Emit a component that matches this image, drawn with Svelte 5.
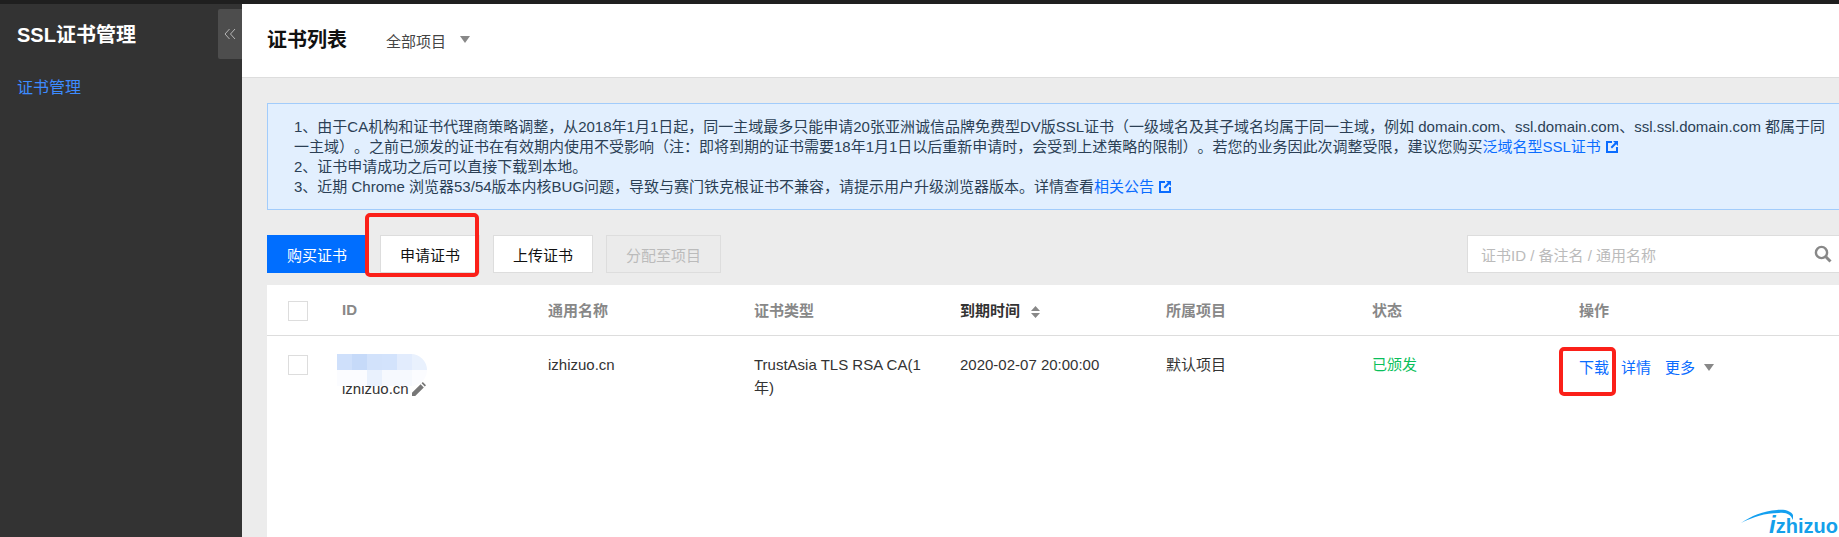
<script lang="ts">
	const columns = [
		{ key: 'id', label: 'ID' },
		{ key: 'name', label: '通用名称' },
		{ key: 'type', label: '证书类型' },
		{ key: 'expire', label: '到期时间', sort: true },
		{ key: 'owner', label: '所属项目' },
		{ key: 'status', label: '状态' },
		{ key: 'ops', label: '操作' }
	];

	// mosaic over the certificate id
	const mosaic = [
		'#cfe0fb', '#c6daf9', '#d2e2fb', '#d3e3fc', '#e2ecfd', '#e9f1fd',
		'#fbfcff', '#fbfcff', '#e9f1fd', '#f6f9fe', '#f6f9fe', '#fbfcff'
	];
</script>

<div class="page">
	<div class="topbar"></div>
	<div class="shell">
		<aside class="sidebar">
			<div class="brand">SSL证书管理</div>
			<button class="collapse" aria-label="收起">
				<svg width="12" height="12" viewBox="0 0 12 12" fill="none" stroke="#b5b5b5" stroke-width="1">
					<path d="M5.5 1 L1 6 L5.5 11 M11 1 L6.5 6 L11 11" />
				</svg>
			</button>
			<nav class="nav">证书管理</nav>
		</aside>

		<main class="main">
			<header class="header">
				<h1>证书列表</h1>
				<div class="project">全部项目</div>
				<span class="caret caret-lg"></span>
			</header>

			<div class="content">
				<div class="notice">
					<p>1、由于CA机构和证书代理商策略调整，从2018年1月1日起，同一主域最多只能申请20张亚洲诚信品牌免费型DV版SSL证书（一级域名及其子域名均属于同一主域，例如 domain.com、ssl.domain.com、ssl.ssl.domain.com 都属于同一主域）。之前已颁发的证书在有效期内使用不受影响（注：即将到期的证书需要18年1月1日以后重新申请时，会受到上述策略的限制）。若您的业务因此次调整受限，建议您购买<a href="#a">泛域名型SSL证书</a><svg class="ext" viewBox="0 0 12 12"><path d="M0 0H6V2H2V10H10V6H12V12H0Z" /><path d="M7 0H12V5L10.2 3.2 6 7.4 4.6 6 8.8 1.8Z" /></svg></p>
					<p>2、证书申请成功之后可以直接下载到本地。</p>
					<p>3、近期 Chrome 浏览器53/54版本内核BUG问题，导致与赛门铁克根证书不兼容，请提示用户升级浏览器版本。详情查看<a href="#b">相关公告</a><svg class="ext" viewBox="0 0 12 12"><path d="M0 0H6V2H2V10H10V6H12V12H0Z" /><path d="M7 0H12V5L10.2 3.2 6 7.4 4.6 6 8.8 1.8Z" /></svg></p>
				</div>

				<div class="toolbar">
					<button class="btn primary">购买证书</button>
					<button class="btn">申请证书</button>
					<button class="btn">上传证书</button>
					<button class="btn disabled">分配至项目</button>
					<div class="search">
						<span>证书ID / 备注名 / 通用名称</span>
						<svg width="18" height="18" viewBox="0 0 18 18" fill="none" stroke="#888" stroke-width="2.4">
							<circle cx="7.5" cy="7.5" r="5.6" /><path d="M11.8 11.8 L16.5 16.5" stroke-width="3" />
						</svg>
					</div>
				</div>

				<section class="table">
					<div class="row head">
						<span class="check"></span>
						{#each columns as col}
							<div class="cell" class:sorted={col.sort}>
								{col.label}
								{#if col.sort}
									<svg class="sort" width="9" height="12" viewBox="0 0 9 12" fill="#888"><path d="M4.5 0L9 5H0Z M4.5 12L0 7H9Z" /></svg>
								{/if}
							</div>
						{/each}
					</div>
					<div class="row body">
						<span class="check"></span>
						<div class="cell">
							<div class="mosaic">
								{#each mosaic as c}
									<i style="background:{c}"></i>
								{/each}
							</div>
							<div class="idname">
								izhizuo.cn
								<svg width="14" height="14" viewBox="0 0 14 14" fill="#777"><path d="M0 14V10.8L8.6 2.2 11.8 5.4 3.2 14Z M9.6 1.2 10.8 0 14 3.2 12.8 4.4Z" /></svg>
							</div>
						</div>
						<div class="cell">izhizuo.cn</div>
						<div class="cell type">TrustAsia TLS RSA CA(1年)</div>
						<div class="cell">2020-02-07 20:00:00</div>
						<div class="cell">默认项目</div>
						<div class="cell ok">已颁发</div>
						<div class="cell ops">
							<a href="#d">下载</a>
							<a href="#e">详情</a>
							<a class="more" href="#f">更多</a>
							<span class="caret"></span>
						</div>
					</div>
				</section>
			</div>
		</main>
	</div>

	<!-- red annotations drawn over the screenshot -->
	<div class="mark mark-apply"></div>
	<div class="mark mark-download"></div>

	<div class="logo">
		<svg width="54" height="18" viewBox="0 0 54 18" fill="#14a0f0"><path d="M0 16C10 9 22 4 36 3 44 2 50 4 52 8L52 13C50 8 46 5 38 6 24 6 12 10 0 16Z" /></svg>
		<span><em>i</em>zhizuo</span>
	</div>
</div>

<style>
	:global(body) {
		margin: 0;
		background: #ececec;
	}

	.page {
		position: relative;
		width: 1839px;
		height: 537px;
		overflow: hidden;
		font-family: "Liberation Sans", "Noto Sans CJK SC", sans-serif;
		font-size: 15px;
		color: #333;
	}

	.topbar {
		height: 4px;
		background: #1f1f1f;
	}

	.shell {
		display: flex;
		height: 533px;
	}

	.sidebar {
		position: relative;
		flex: 0 0 242px;
		background: #333;
		box-sizing: border-box;
		padding: 17px 17px;
	}

	.brand {
		color: #fff;
		font-size: 20px;
		font-weight: 700;
		line-height: 28px;
	}

	.collapse {
		position: absolute;
		right: 0;
		top: 5px;
		width: 24px;
		height: 50px;
		padding: 0;
		border: 0;
		border-radius: 2px 0 0 2px;
		background: #4d4d4d;
		display: flex;
		align-items: center;
		justify-content: center;
	}

	.nav {
		margin-top: 27px;
		color: #3d8bff;
		font-size: 16px;
		line-height: 24px;
	}

	.main {
		flex: 1;
		min-width: 0;
	}

	.header {
		height: 74px;
		background: #fff;
		border-bottom: 1px solid #ddd;
		box-sizing: border-box;
		display: flex;
		align-items: center;
		padding: 0 0 4px 25px;
	}

	h1 {
		margin: 0;
		font-size: 20px;
		font-weight: 700;
		color: #111;
	}

	.project {
		margin-left: 39px;
		margin-top: 3px;
		color: #444;
	}

	.caret {
		display: inline-block;
		width: 0;
		height: 0;
		border-left: 5px solid transparent;
		border-right: 5px solid transparent;
		border-top: 7px solid #888;
	}

	.caret-lg {
		margin-left: 14px;
		margin-top: 1px;
	}

	.content {
		padding: 25px 0 0 25px;
	}

	.notice {
		box-sizing: border-box;
		height: 107px;
		background: #e2effe;
		border: 1px solid #a2ccfb;
		border-right: 0;
		padding: 13px 8px 0 26px;
		line-height: 20px;
		color: #2b3f55;
		text-spacing-trim: space-all;
	}

	.notice p {
		margin: 0;
	}

	.notice a,
	.ops a {
		color: #0a6cff;
		text-decoration: none;
	}

	.ext {
		display: inline-block;
		width: 12px;
		height: 12px;
		margin-left: 5px;
		vertical-align: -1px;
		fill: #0a6cff;
	}

	.toolbar {
		display: flex;
		align-items: flex-start;
		gap: 13px;
		margin-top: 25px;
	}

	.btn {
		box-sizing: border-box;
		width: 100px;
		height: 38px;
		padding: 0;
		background: #fff;
		border: 1px solid #ddd;
		color: #111;
		font: inherit;
	}

	.btn.primary {
		background: #006eff;
		border-color: #006eff;
		color: #fff;
	}

	.btn.disabled {
		width: 115px;
		background: #ebebeb;
		color: #bbb;
	}

	.search {
		box-sizing: border-box;
		width: 372px;
		height: 38px;
		margin-left: auto;
		background: #fff;
		border: 1px solid #ddd;
		border-right: 0;
		display: flex;
		align-items: center;
		justify-content: space-between;
		padding: 0 7px 0 13px;
		color: #bbb;
	}

	.table {
		margin-top: 12px;
		background: #fff;
		height: 260px;
	}

	.row {
		position: relative;
		display: grid;
		grid-template-columns: 206px 206px 206px 206px 206px 207px 1fr;
		padding-left: 75px;
	}

	.head {
		height: 51px;
		border-bottom: 1px solid #ddd;
		box-sizing: border-box;
		align-items: center;
		color: #888;
		font-weight: 700;
		padding-bottom: 2px;
	}

	.sorted {
		color: #333;
	}

	.sort {
		margin-left: 7px;
		vertical-align: -2px;
	}

	.check {
		position: absolute;
		left: 21px;
		top: 16px;
		width: 20px;
		height: 20px;
		box-sizing: border-box;
		border: 1px solid #ddd;
		background: #fff;
	}

	.body {
		padding-top: 17px;
		line-height: 23px;
	}

	.body .check {
		top: 19px;
	}

	.cell {
		padding-right: 14px;
	}

	.type {
		padding-right: 32px;
	}

	.mosaic {
		position: relative;
		z-index: 1;
		display: grid;
		grid-template-columns: repeat(6, 15px);
		grid-auto-rows: 16px;
		margin: 1px 0 0 -5px;
		width: 90px;
		border-radius: 0 16px 16px 0;
		overflow: hidden;
	}

	.idname {
		display: flex;
		align-items: center;
		gap: 3px;
		line-height: 20px;
		margin-top: -7px;
	}

	.idname svg {
		position: relative;
		z-index: 2;
	}

	.ok {
		color: #0abf5b;
	}

	.ops {
		display: flex;
		align-items: center;
		height: 23px;
		gap: 12px;
		padding-top: 3px;
	}

	.more {
		margin-left: 2px;
	}

	.ops .caret {
		margin-left: -3px;
	}

	.mark {
		position: absolute;
		box-sizing: border-box;
		border: 4px solid #fb2019;
		border-radius: 5px;
	}

	.mark-apply {
		left: 365px;
		top: 213px;
		width: 114px;
		height: 64px;
	}

	.mark-download {
		left: 1559px;
		top: 347px;
		width: 57px;
		height: 49px;
	}

	.logo {
		position: absolute;
		left: 1741px;
		top: 507px;
		width: 98px;
		height: 30px;
	}

	.logo svg {
		position: absolute;
		left: 0;
		top: 0;
	}

	.logo span {
		position: absolute;
		right: 1px;
		top: 7px;
		color: #14a0ea;
		font: 700 20px/24px "Liberation Sans", sans-serif;
	}

	.logo em {
		font-size: 24px;
		line-height: 20px;
	}
</style>
